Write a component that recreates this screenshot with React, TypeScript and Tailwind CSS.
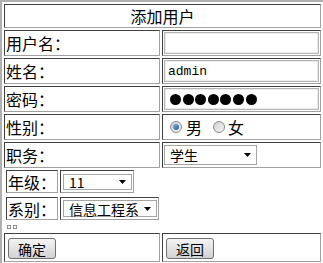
import type { ReactNode } from 'react';

const cell = 'border border-[#a0a0a0] border-t-[#404040] border-l-[#404040] p-px';

function Arrow() {
  return (
    <svg width="7" height="4" viewBox="0 0 7 4" className="absolute right-[5px] top-1/2 -translate-y-1/2">
      <path d="M0 0H7L3.5 4Z" fill="#000" />
    </svg>
  );
}

function Select({ value, className }: { value: string; className: string }) {
  return (
    <div className={`relative border border-[#a5a5a5] bg-white flex items-center pl-[5px] text-[14px] leading-none ${className}`}>
      <span>{value}</span>
      <Arrow />
    </div>
  );
}

function Radio({ checked }: { checked?: boolean }) {
  return (
    <span className="w-[12px] h-[12px] rounded-full border border-[#8a8a8a] bg-linear-to-br from-[#cfcfcf] to-[#f6f6f6] flex items-center justify-center">
      {checked && <span className="w-[6px] h-[6px] rounded-full bg-linear-to-br from-[#7fb4e6] to-[#1f5a9c]" />}
    </span>
  );
}

function Button({ children }: { children: ReactNode }) {
  return (
    <button className="ml-[2px] w-[48px] h-[21px] rounded-[3px] border border-[#707070] bg-linear-to-b from-[#f4f4f4] to-[#d2d2d2] text-[14px] leading-none text-black">
      {children}
    </button>
  );
}

function Row({ label, children }: { label: string; children: ReactNode }) {
  return (
    <tr>
      <td className={`${cell} h-[26px] text-[16px] leading-none`}>{label}</td>
      <td className={`${cell} h-[26px]`}>{children}</td>
    </tr>
  );
}

export default function App() {
  return (
    <div className="w-[323px] h-[263px] overflow-hidden bg-white text-black font-['Noto_Sans_CJK_SC',sans-serif]">
      <table className="w-[323px] table-fixed border-separate border-spacing-[2px] border-t-2 border-l-2 border-t-[#b0b0b0] border-l-[#b0b0b0]">
        <colgroup>
          <col className="w-[156px]" />
          <col />
        </colgroup>
        <tbody>
          <tr>
            <td colSpan={2} className={`${cell} h-[24px] text-center text-[16px] leading-none`}>
              添加用户
            </td>
          </tr>
          <Row label="用户名：">
            <input className="block w-full h-[22px] border border-[#b4b4b4] shadow-[inset_0_0_0_1px_#ececec] outline-none" />
          </Row>
          <Row label="姓名：">
            <input
              defaultValue="admin"
              className="block w-full h-[22px] border border-[#b4b4b4] shadow-[inset_0_0_0_1px_#ececec] outline-none pl-[3px] text-[13px] font-['Liberation_Mono',monospace]"
            />
          </Row>
          <Row label="密码：">
            <div className="w-full h-[22px] border border-[#b4b4b4] shadow-[inset_0_0_0_1px_#ececec] flex items-center gap-[1.6px] pl-[5px]">
              {[0, 1, 2, 3, 4, 5, 6].map((i) => (
                <span key={i} className="w-[11px] h-[11px] rounded-full bg-black" />
              ))}
            </div>
          </Row>
          <Row label="性别：">
            <div className="flex items-center text-[16px] leading-none pl-[6px]">
              <Radio checked />
              <span className="ml-[4px]">男</span>
              <span className="ml-[11px]">
                <Radio />
              </span>
              <span className="ml-[3px]">女</span>
            </div>
          </Row>
          <Row label="职务：">
            <Select value="学生" className="w-[93px] h-[20px]" />
          </Row>
          <tr>
            <td colSpan={2} className="p-0">
              <table className="border-separate border-spacing-x-[2px] border-spacing-y-0 mb-[4px]">
                <tbody>
                  <tr>
                    <td className={`${cell} w-[52px] h-[23px] text-[16px] leading-none`}>年级：</td>
                    <td className={`${cell} w-[73px] h-[23px] pl-[2px]`}>
                      <Select value="11" className="w-[69px] h-[16px] text-[13px]" />
                    </td>
                  </tr>
                </tbody>
              </table>
              <table className="border-separate border-spacing-x-[2px] border-spacing-y-0">
                <tbody>
                  <tr>
                    <td className={`${cell} w-[52px] h-[23px] text-[16px] leading-none`}>系别：</td>
                    <td className={`${cell} w-[99px] h-[23px] pl-[2px]`}>
                      <Select value="信息工程系" className="w-[94px] h-[17px] text-[13.5px]" />
                    </td>
                  </tr>
                </tbody>
              </table>
              <div className="h-[11px] flex items-center gap-[2px] pl-[3px] pt-[3px]">
                <span className="w-[4px] h-[4px] border border-[#909090]" />
                <span className="w-[4px] h-[4px] border border-[#909090]" />
              </div>
            </td>
          </tr>
          <tr>
            <td className={`${cell} h-[29px]`}>
              <Button>确定</Button>
            </td>
            <td className={`${cell} h-[29px]`}>
              <Button>返回</Button>
            </td>
          </tr>
        </tbody>
      </table>
    </div>
  );
}
